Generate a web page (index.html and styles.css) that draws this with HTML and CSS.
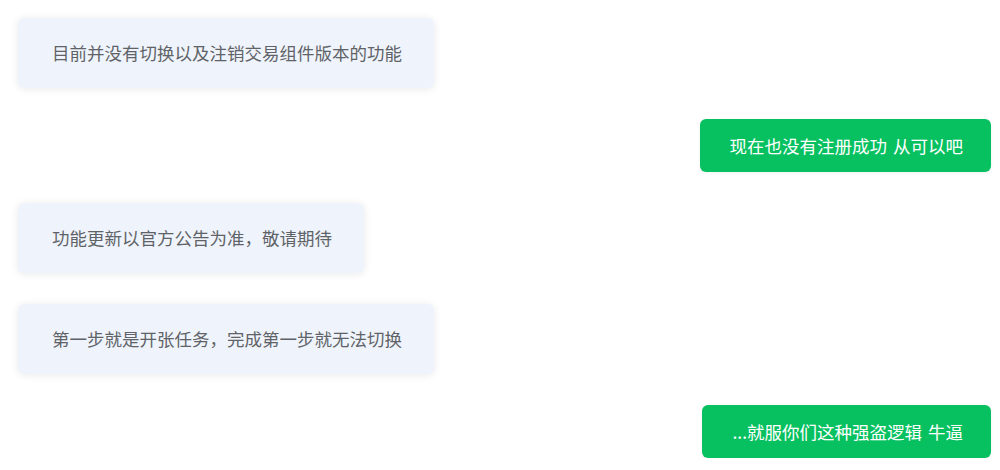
FILE: index.html
```html
<!DOCTYPE html>
<html lang="zh-CN">
<head>
<meta charset="utf-8">
<link rel="stylesheet" href="styles.css">
</head>
<body>
<div class="chat">
  <div class="msg left"><div class="bubble in">目前并没有切换以及注销交易组件版本的功能</div></div>
  <div class="msg right"><div class="bubble out">现在也没有注册成功 从可以吧</div></div>
  <div class="msg left"><div class="bubble in">功能更新以官方公告为准，敬请期待</div></div>
  <div class="msg left"><div class="bubble in">第一步就是开张任务，完成第一步就无法切换</div></div>
  <div class="msg right"><div class="bubble out">...就服你们这种强盗逻辑 牛逼</div></div>
</div>
</body>
</html>
```

FILE: styles.css
```css
html, body {
  margin: 0;
  padding: 0;
  background: #ffffff;
}
body {
  font-family: "Microsoft YaHei", "Noto Sans CJK SC", "Noto Sans", sans-serif;
  font-size: 17.5px;
}
.chat {
  display: flex;
  flex-direction: column;
  gap: 31px;
  padding: 18px 9px 0 18px;
}
.msg {
  display: flex;
}
.msg.left {
  justify-content: flex-start;
}
.msg.right {
  justify-content: flex-end;
}
.bubble {
  border-radius: 6px;
  white-space: nowrap;
}
.bubble.in {
  background: #eff4fc;
  color: #5f6368;
  padding: 24px 32px 24px 34px;
  line-height: 22px;
  box-shadow: 0 1px 8px rgba(0, 0, 0, 0.09);
}
.bubble.out {
  background: #07c160;
  color: #ffffff;
  padding: 15px 28px 15px 30px;
  line-height: 23px;
  word-spacing: 2px;
  box-shadow: 0 1px 4px rgba(0, 0, 0, 0.06);
}
```
